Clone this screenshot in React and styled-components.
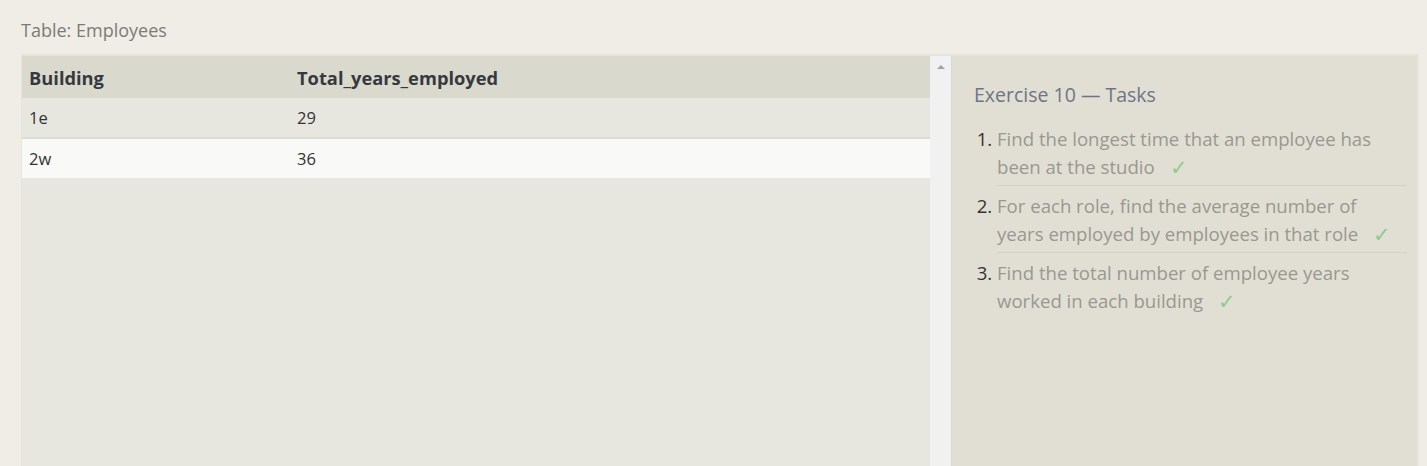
import React from 'react';
import styled, { createGlobalStyle } from 'styled-components';

const GlobalStyle = createGlobalStyle`
  html, body {
    margin: 0;
    padding: 0;
    background: #efede5;
    font-family: "Open Sans", "Noto Sans", sans-serif;
    overflow: hidden;
  }
`;

const Page = styled.div`
  padding: 18px 8px 0 21px;
  height: 466px;
  box-sizing: border-box;
  display: flex;
  flex-direction: column;
`;

const Caption = styled.div`
  font-size: 18px;
  color: #7c7b78;
  line-height: 24px;
  margin-bottom: 12px;
`;

const Frame = styled.div`
  flex: 1;
  display: flex;
  width: 1398px;
  border: 2px solid #e6e4dc;
  border-bottom: none;
  border-left-width: 1px;
  box-sizing: border-box;
  background: #e8e7df;
`;

const TableArea = styled.div`
  width: 908px;
  background: #e8e7df;
`;

const Table = styled.table`
  width: 100%;
  border-collapse: collapse;
  color: #333;
`;

const HeadCell = styled.th`
  text-align: left;
  font-weight: 700;
  font-size: 18.3px;
  color: #363a3e;
  background: #dad9ce;
  height: 42px;
  padding: 0 7px;
  width: ${p => p.$w || 'auto'};
`;

const Row = styled.tr`
  background: ${p => (p.$alt ? '#f9f9f8' : '#e8e7df')};
  border-top: ${p => (p.$alt ? '2px solid #dcdbd4' : 'none')};
`;

const Cell = styled.td`
  font-size: 16.5px;
  height: 39px;
  padding: 0 7px;
  color: #333;
`;

const Scrollbar = styled.div`
  width: 21px;
  background: #f1f1f1;
  display: flex;
  justify-content: center;
  padding-top: 9px;
  box-sizing: border-box;
`;

const Arrow = styled.div`
  width: 0;
  height: 0;
  border-left: 4px solid transparent;
  border-right: 4px solid transparent;
  border-bottom: 4px solid #a3a3a3;
`;

const Panel = styled.div`
  flex: 1;
  background: #e1dfd4;
  border-left: 1px solid #dbd9cf;
  padding: 25px 10px 0 22px;
`;

const Title = styled.h3`
  margin: 0 0 16px;
  font-size: 19.5px;
  font-weight: 400;
  color: #6f7585;
  line-height: 28px;
`;

const List = styled.ol`
  margin: 0;
  padding: 0 0 0 23px;
`;

const Item = styled.li`
  font-size: 18.6px;
  line-height: 28px;
  color: #9a9890;
  padding: 0 0 4px;
  margin-bottom: 6px;
  border-bottom: ${p => (p.$last ? 'none' : '1px solid #d3d1c6')};
  &::marker {
    color: ${p => p.$markerColor || '#333'};
  }
`;

const Check = styled.span`
  display: inline-block;
  font-size: 21px;
  line-height: 28px;
  vertical-align: top;
  color: #8ccc8c;
  margin-left: 15px;
`;

const rows = [
  { building: '1e', years: 29 },
  { building: '2w', years: 36 },
];

const tasks = [
  'Find the longest time that an employee has been at the studio',
  'For each role, find the average number of years employed by employees in that role',
  'Find the total number of employee years worked in each building',
];

export default function App() {
  return (
    <>
      <GlobalStyle />
      <Page>
        <Caption>Table: Employees</Caption>
        <Frame>
          <TableArea>
            <Table>
              <thead>
                <tr>
                  <HeadCell $w="254px">Building</HeadCell>
                  <HeadCell>Total_years_employed</HeadCell>
                </tr>
              </thead>
              <tbody>
                {rows.map((r, i) => (
                  <Row key={r.building} $alt={i % 2 === 1}>
                    <Cell>{r.building}</Cell>
                    <Cell>{r.years}</Cell>
                  </Row>
                ))}
              </tbody>
            </Table>
          </TableArea>
          <Scrollbar>
            <Arrow />
          </Scrollbar>
          <Panel>
            <Title>Exercise 10 — Tasks</Title>
            <List>
              {tasks.map((t, i) => (
                <Item key={i} $last={i === tasks.length - 1} $markerColor={i === 0 ? '#4a2a2a' : '#333'}>
                  {t}
                  <Check>✓</Check>
                </Item>
              ))}
            </List>
          </Panel>
        </Frame>
      </Page>
    </>
  );
}
